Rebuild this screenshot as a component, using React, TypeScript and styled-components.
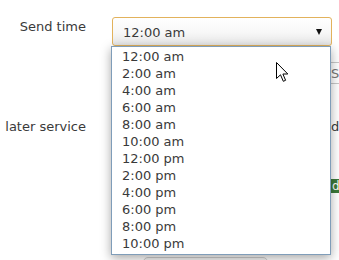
import React from 'react'
import styled, { createGlobalStyle } from 'styled-components'

const GlobalStyle = createGlobalStyle`
  html, body {
    margin: 0;
    background: #fff;
    overflow: hidden;
  }
  body {
    font-family: "DejaVu Sans", "Liberation Sans", sans-serif;
    font-size: 13px;
    color: #3a3a3a;
  }
`

const Page = styled.div`
  width: 460px;
  padding-top: 17px;
  position: relative;
`

const Row = styled.div<{ $mt?: number }>`
  display: grid;
  grid-template-columns: 86px 1fr;
  column-gap: 26px;
  margin-top: ${({ $mt }) => $mt || 0}px;
  align-items: start;
`

const Label = styled.div<{ $pt?: number }>`
  text-align: right;
  line-height: 17px;
  padding-top: ${({ $pt }) => $pt || 0}px;
  color: #3a3a3a;
  white-space: nowrap;
`

const SelectWrap = styled.div`
  position: relative;
  width: 220px;
`

const SelectBox = styled.div`
  box-sizing: border-box;
  height: 29px;
  border: 1px solid #e2b25c;
  border-radius: 3px;
  background: linear-gradient(#ffffff 0%, #f7f7f7 55%, #e6e6e6 100%);
  display: flex;
  align-items: center;
  justify-content: space-between;
  padding: 1px 9px 0 10px;
  color: #3a3a3a;
`

const Arrow = styled.span`
  width: 0;
  height: 0;
  border-left: 3.5px solid transparent;
  border-right: 3.5px solid transparent;
  border-top: 6px solid #111;
  margin-top: -1px;
`

const OptionList = styled.ul`
  position: absolute;
  z-index: 5;
  top: 29px;
  left: -1px;
  width: 220px;
  box-sizing: border-box;
  margin: 0;
  padding: 1px 0 2px;
  list-style: none;
  background: #fff;
  border: 1px solid #7f9db9;
  box-shadow: 0 3px 10px rgba(0, 0, 0, 0.35);
`

const Option = styled.li`
  line-height: 17px;
  height: 17px;
  padding-left: 10px;
  color: #3a3a3a;
`

const SearchInput = styled.div`
  margin-left: 213px;
  box-sizing: border-box;
  width: 120px;
  height: 22px;
  border: 1px solid #c8c8c8;
  padding: 2px 0 0 5px;
  line-height: 17px;
  color: #777;
  background: #fff;
`

const Trail = styled.div`
  margin-left: 219px;
  line-height: 17px;
  color: #3a3a3a;
  white-space: nowrap;
`

const GreenButton = styled.div`
  margin-left: 218px;
  width: 60px;
  height: 14px;
  background: #3d7a3a;
  color: #fff;
  font-size: 12px;
  line-height: 14px;
  padding-left: 2px;
  white-space: nowrap;
`

const GrayButton = styled.div`
  margin-left: 31px;
  width: 125px;
  height: 24px;
  box-sizing: border-box;
  border: 1px solid #cfcfcf;
  border-radius: 5px;
  background: #f4f4f4;
`

const Cursor = styled.svg`
  position: absolute;
  z-index: 10;
  left: 276px;
  top: 62px;
`

const times = [
  '12:00 am', '2:00 am', '4:00 am', '6:00 am', '8:00 am', '10:00 am',
  '12:00 pm', '2:00 pm', '4:00 pm', '6:00 pm', '8:00 pm', '10:00 pm',
]

export default function App() {
  return (
    <Page>
      <GlobalStyle />
      <Row>
        <Label $pt={1}>Send time</Label>
        <SelectWrap>
          <SelectBox>
            <span>12:00 am</span>
            <Arrow />
          </SelectBox>
          <OptionList>
            {times.map((t, i) => <Option key={`time_${i}`}>{t}</Option>)}
          </OptionList>
        </SelectWrap>
      </Row>
      <Row $mt={16}>
        <Label />
        <SearchInput>Search</SearchInput>
      </Row>
      <Row $mt={34}>
        <Label>later service</Label>
        <Trail>default</Trail>
      </Row>
      <Row $mt={44}>
        <Label />
        <GreenButton>dd</GreenButton>
      </Row>
      <Row $mt={64}>
        <Label />
        <GrayButton />
      </Row>
      <Cursor width="13" height="21" viewBox="0 0 13 21">
        <path
          d="M0.5 0.5 L0.5 16.5 L4.5 12.8 L7.3 19.3 L9.6 18.3 L6.9 12 L11.8 12 Z"
          fill="#fff"
          stroke="#000"
          strokeWidth="1"
          strokeLinejoin="round"
        />
      </Cursor>
    </Page>
  )
}
